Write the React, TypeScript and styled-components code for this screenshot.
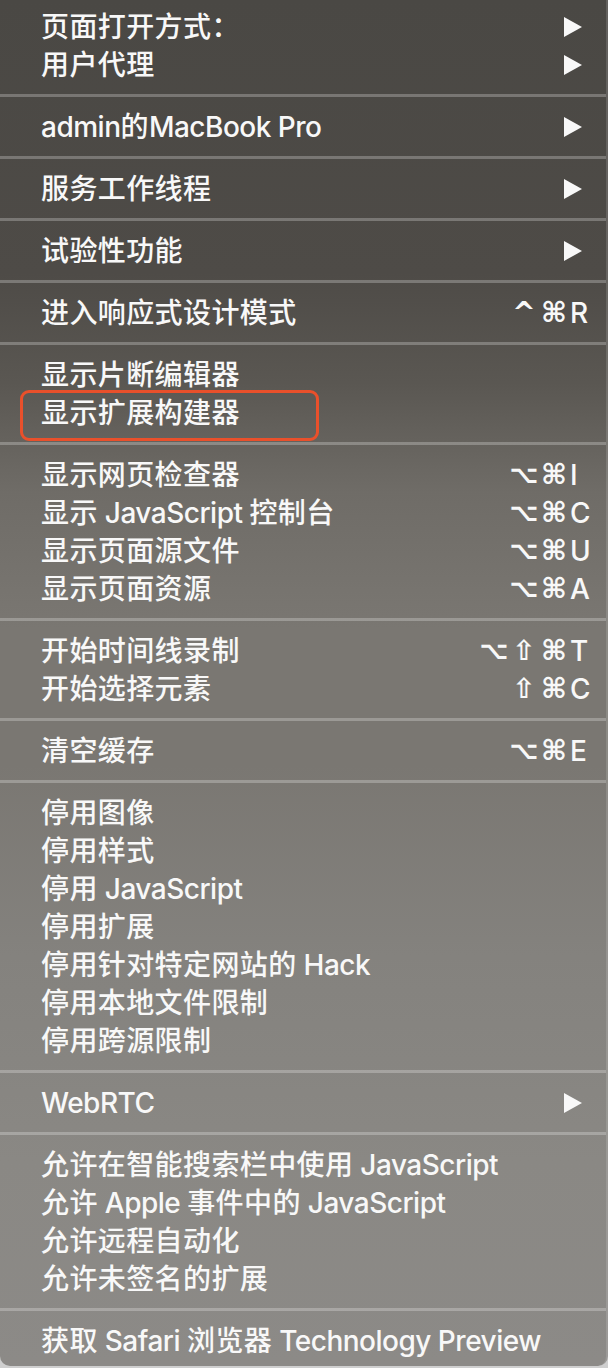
import React from "react";
import styled, { createGlobalStyle } from "styled-components";

const GlobalStyle = createGlobalStyle`
  html, body {
    margin: 0;
    padding: 0;
    background: #cfcfcf;
  }
`;

const Menu = styled.div`
  width: 606px;
  padding: 8px 0 6px;
  border-right: 2px solid rgba(255, 255, 255, 0.14);
  border-radius: 0 0 10px 10px;
  background: linear-gradient(
    180deg,
    #4a4844 0%,
    #4e4b47 20%,
    #5a5752 28%,
    #6f6c67 36%,
    #7a7772 46%,
    #7a7772 56%,
    #84827e 70%,
    #8a8884 85%,
    #8c8a87 100%
  );
  color: #f8f8f8;
  font-family: Inter, "Noto Sans CJK SC", sans-serif;
  font-size: 28px;
  font-weight: 500;
`;

const Row = styled.div`
  position: relative;
  height: 38px;
  display: flex;
  align-items: center;
  padding: 0 16px 0 41px;
`;

const Label = styled.span`
  flex: 1;
  white-space: nowrap;
  line-height: 38px;
`;

// CJK runs sit a touch wider, Latin runs a touch tighter than the fonts we have
const Run = styled.span<{ $cjk: boolean }>`
  letter-spacing: ${(p) => (p.$cjk ? "0.4px" : "-0.5px")};
`;

const Arrow = styled.span`
  width: 0;
  height: 0;
  margin-right: 8px;
  border-top: 10px solid transparent;
  border-bottom: 10px solid transparent;
  border-left: 18px solid #f8f8f8;
`;

const Shortcut = styled.span`
  display: flex;
  align-items: center;
`;

const Mod = styled.span<{ $size: number }>`
  width: 30px;
  text-align: center;
  font-family: "DejaVu Sans", sans-serif;
  font-size: ${(p) => p.$size}px;
  font-weight: 700;
  line-height: 38px;
`;

const Key = styled.span`
  width: 20px;
  margin-left: 1px;
  font-family: Inter, sans-serif;
  font-size: 28px;
  line-height: 38px;
`;

const Separator = styled.div`
  height: 3px;
  margin: 10px 0 11px;
  background: rgba(255, 255, 255, 0.25);
`;

const Highlight = styled.span`
  position: absolute;
  left: 20px;
  top: -4px;
  width: 293px;
  height: 45px;
  border: 3px solid #e9502b;
  border-radius: 9px;
`;

const modSize: Record<string, number> = { "⌥": 25, "⇧": 28, "⌘": 28, "^": 28 };

type Item = {
  label: string;
  sub?: boolean;
  mods?: string[];
  key?: string;
  marked?: boolean;
};

const groups: Item[][] = [
  [
    { label: "页面打开方式：", sub: true },
    { label: "用户代理", sub: true },
  ],
  [{ label: "admin的MacBook Pro", sub: true }],
  [{ label: "服务工作线程", sub: true }],
  [{ label: "试验性功能", sub: true }],
  [{ label: "进入响应式设计模式", mods: ["^", "⌘"], key: "R" }],
  [
    { label: "显示片断编辑器" },
    { label: "显示扩展构建器", marked: true },
  ],
  [
    { label: "显示网页检查器", mods: ["⌥", "⌘"], key: "I" },
    { label: "显示 JavaScript 控制台", mods: ["⌥", "⌘"], key: "C" },
    { label: "显示页面源文件", mods: ["⌥", "⌘"], key: "U" },
    { label: "显示页面资源", mods: ["⌥", "⌘"], key: "A" },
  ],
  [
    { label: "开始时间线录制", mods: ["⌥", "⇧", "⌘"], key: "T" },
    { label: "开始选择元素", mods: ["⇧", "⌘"], key: "C" },
  ],
  [{ label: "清空缓存", mods: ["⌥", "⌘"], key: "E" }],
  [
    { label: "停用图像" },
    { label: "停用样式" },
    { label: "停用 JavaScript" },
    { label: "停用扩展" },
    { label: "停用针对特定网站的 Hack" },
    { label: "停用本地文件限制" },
    { label: "停用跨源限制" },
  ],
  [{ label: "WebRTC", sub: true }],
  [
    { label: "允许在智能搜索栏中使用 JavaScript" },
    { label: "允许 Apple 事件中的 JavaScript" },
    { label: "允许远程自动化" },
    { label: "允许未签名的扩展" },
  ],
  [{ label: "获取 Safari 浏览器 Technology Preview" }],
];

const CJK = /[\u3000-\u9fff\uff00-\uffef]/;
const splitRuns = (text: string) =>
  text.match(/[\u3000-\u9fff\uff00-\uffef]+|[^\u3000-\u9fff\uff00-\uffef]+/g) ?? [];

function MenuRow({ item }: { item: Item }) {
  return (
    <Row>
      {item.marked && <Highlight />}
      <Label>
        {splitRuns(item.label).map((r, i) => (
          <Run key={i} $cjk={CJK.test(r)}>
            {r}
          </Run>
        ))}
      </Label>
      {item.sub && <Arrow />}
      {item.key && (
        <Shortcut>
          {item.mods?.map((m, i) => (
            <Mod key={i} $size={modSize[m]}>
              {m}
            </Mod>
          ))}
          <Key>{item.key}</Key>
        </Shortcut>
      )}
    </Row>
  );
}

export default function App() {
  return (
    <>
      <GlobalStyle />
      <Menu>
        {groups.map((group, gi) => (
          <React.Fragment key={gi}>
            {gi > 0 && <Separator />}
            {group.map((item, ii) => (
              <MenuRow key={ii} item={item} />
            ))}
          </React.Fragment>
        ))}
      </Menu>
    </>
  );
}
